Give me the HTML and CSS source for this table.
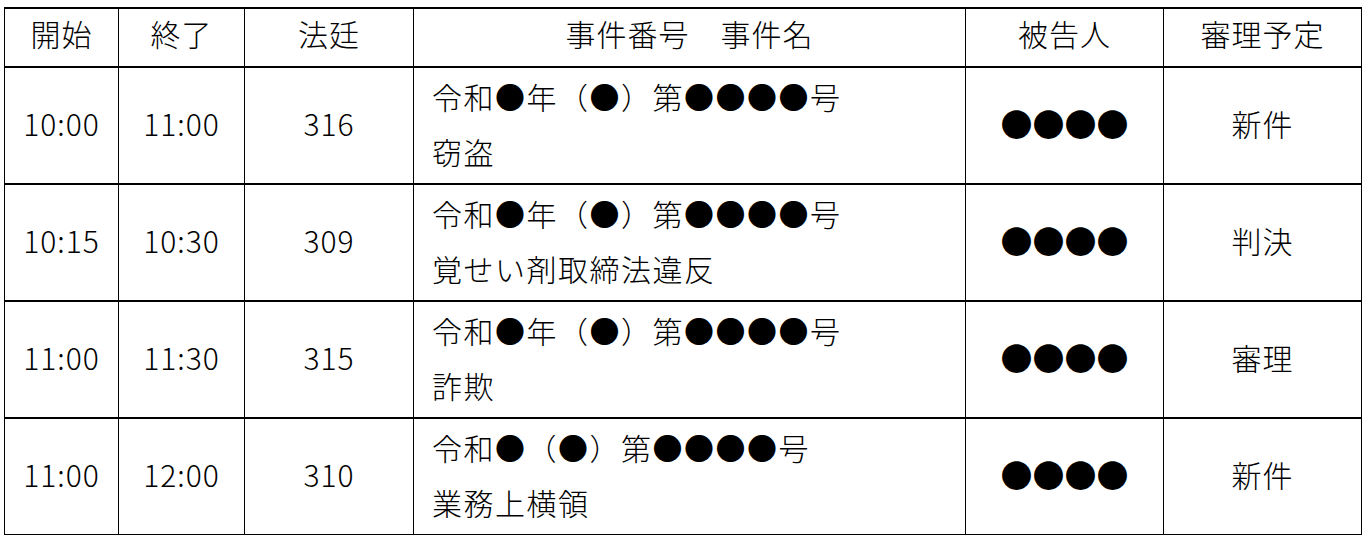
FILE: index.html
```html
<!DOCTYPE html>
<html lang="ja">
<head>
<meta charset="utf-8">
<title>開廷予定</title>
<link rel="stylesheet" href="styles.css">
</head>
<body>
<div class="page">
<table class="schedule">
  <colgroup>
    <col class="c-start">
    <col class="c-end">
    <col class="c-room">
    <col class="c-case">
    <col class="c-def">
    <col class="c-plan">
  </colgroup>
  <thead>
    <tr>
      <th>開始</th>
      <th>終了</th>
      <th>法廷</th>
      <th>事件番号　事件名</th>
      <th>被告人</th>
      <th>審理予定</th>
    </tr>
  </thead>
  <tbody>
    <tr>
      <td>10:00</td>
      <td>11:00</td>
      <td>316</td>
      <td class="case">令和●年（●）第●●●●号<br>窃盗</td>
      <td class="def">●●●●</td>
      <td>新件</td>
    </tr>
    <tr>
      <td>10:15</td>
      <td>10:30</td>
      <td>309</td>
      <td class="case">令和●年（●）第●●●●号<br>覚せい剤取締法違反</td>
      <td class="def">●●●●</td>
      <td>判決</td>
    </tr>
    <tr>
      <td>11:00</td>
      <td>11:30</td>
      <td>315</td>
      <td class="case">令和●年（●）第●●●●号<br>詐欺</td>
      <td class="def">●●●●</td>
      <td>審理</td>
    </tr>
    <tr>
      <td>11:00</td>
      <td>12:00</td>
      <td>310</td>
      <td class="case">令和●（●）第●●●●号<br>業務上横領</td>
      <td class="def">●●●●</td>
      <td>新件</td>
    </tr>
  </tbody>
</table>
</div>
</body>
</html>
```

FILE: styles.css
```css
html, body {
  margin: 0;
  padding: 0;
  background: #fff;
}

.page {
  padding: 7px 0 0 4px;
}

.schedule {
  border-collapse: collapse;
  table-layout: fixed;
  width: 1357px;
  font-family: "Noto Sans CJK JP", "Noto Sans", sans-serif;
  font-weight: 300;
  font-size: 30px;
  letter-spacing: 1px;
  color: #000;
}

.c-start { width: 114px; }
.c-end { width: 126px; }
.c-room { width: 169px; }
.c-case { width: 552px; }
.c-def { width: 198px; }
.c-plan { width: 198px; }

.schedule th,
.schedule td {
  border-left: 1px solid #000;
  border-right: 1px solid #000;
  border-top: 2px solid #000;
  border-bottom: 2px solid #000;
  text-align: center;
  vertical-align: middle;
  font-weight: 300;
}

.schedule th {
  height: 48px;
  padding: 0 0 9px 0;
  line-height: 40px;
}

.schedule td {
  height: 109.5px;
  padding: 0 0 5.5px 0;
  line-height: 40px;
}

.schedule tbody tr:last-child td {
  border-bottom: 1px solid #000;
}

.schedule td.case {
  text-align: left;
  padding: 0 0 3px 18px;
  line-height: 55px;
  font-size: 30px;
  letter-spacing: 1.5px;
}

.schedule td.def {
  font-size: 32px;
  font-weight: 700;
  letter-spacing: 0;
}
```
